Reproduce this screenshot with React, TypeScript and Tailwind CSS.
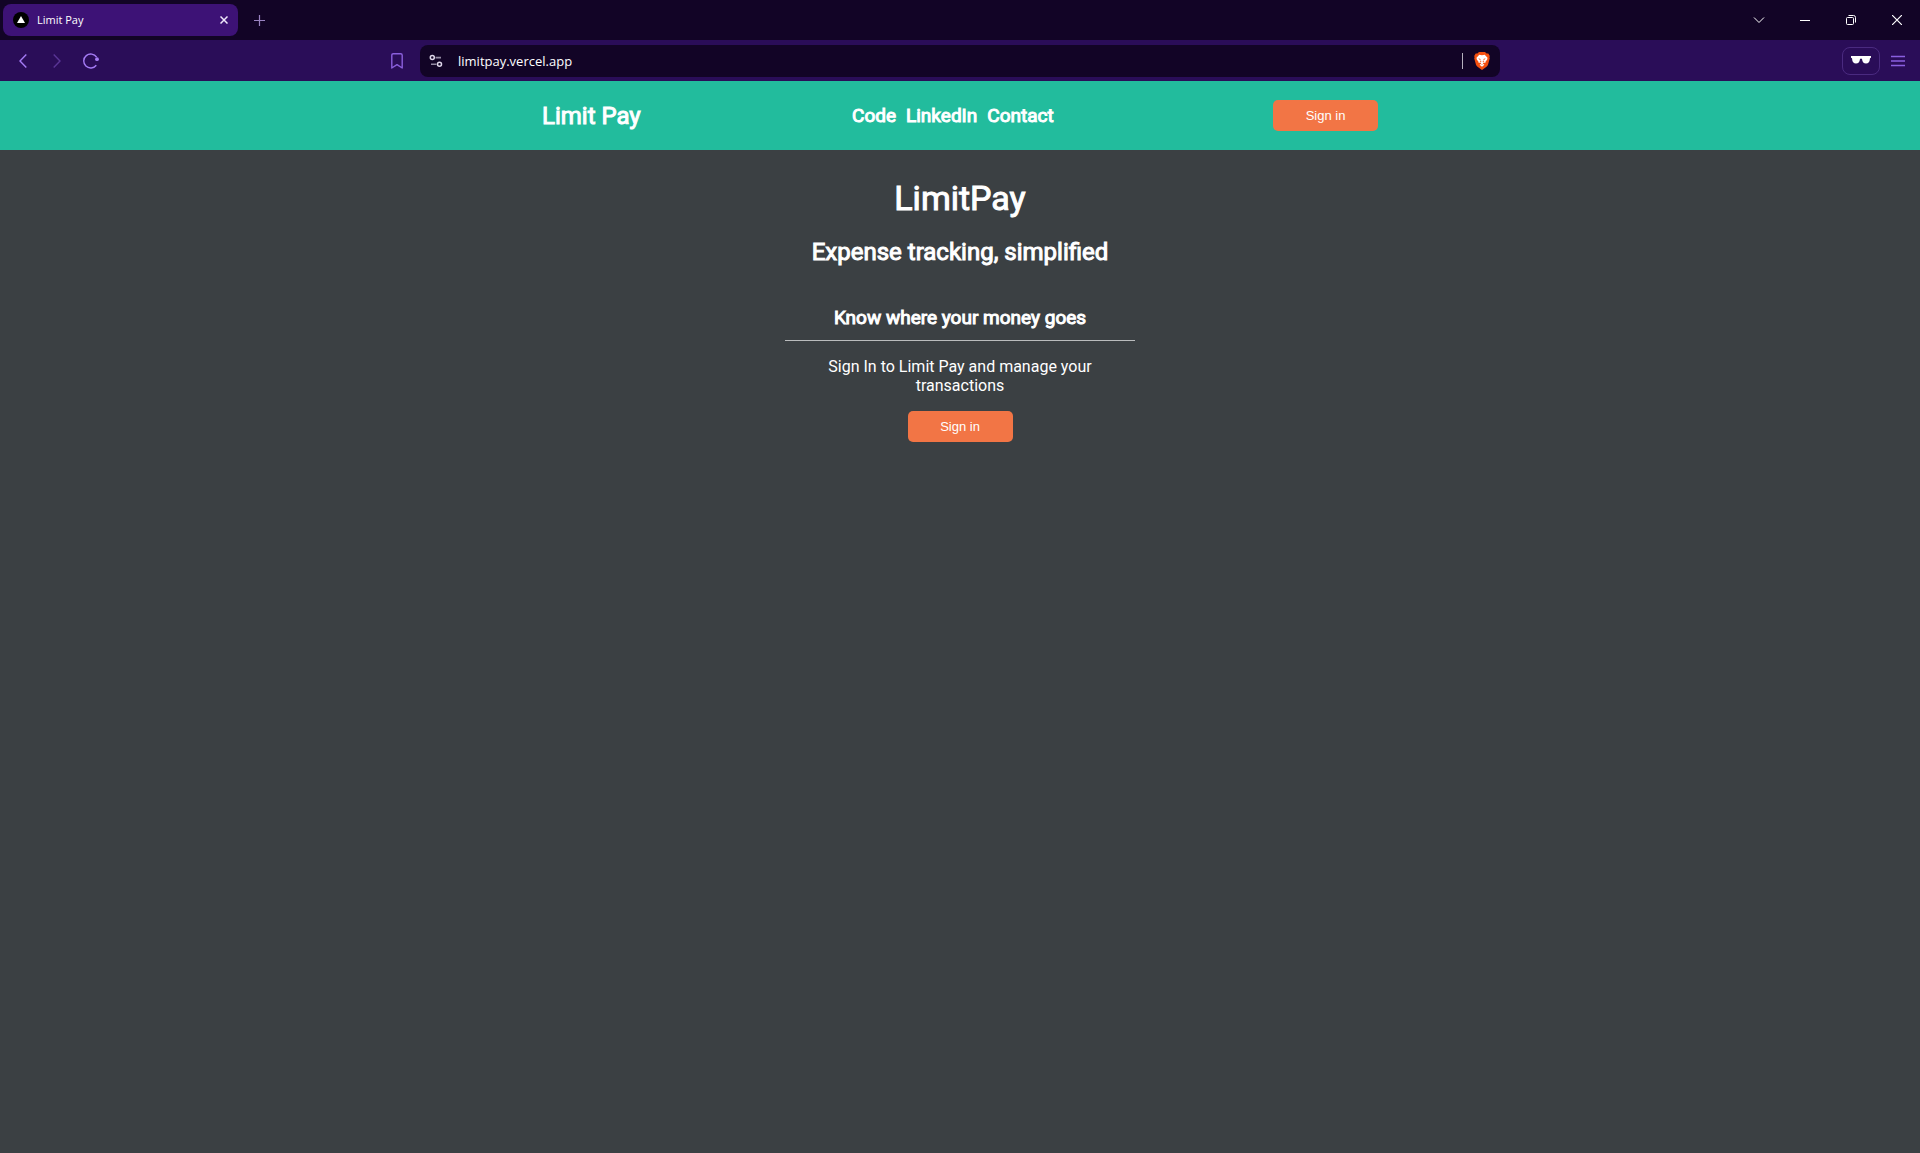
import React from "react";

const heavy = "font-normal [-webkit-text-stroke:1px_white]";

function SignIn() {
  return (
    <button
      type="button"
      className="h-[31px] w-[105px] rounded-[5px] bg-[#f27545] font-['Liberation_Sans',sans-serif] text-[13px] leading-4 text-white"
    >
      Sign in
    </button>
  );
}

function TabStrip() {
  return (
    <div className="flex h-10 items-center justify-between bg-[#120426]">
      <div className="flex items-center">
        <div className="ml-[3px] flex h-8 w-[235px] items-center rounded-lg bg-[#3d1276] pr-[6px] pl-[10px]">
          <svg viewBox="0 0 16 16" className="size-4" aria-hidden="true">
            <circle cx="8" cy="8" r="8" fill="#000" />
            <path d="M8 4L12 11H4Z" fill="#fff" />
          </svg>
          <span className="ml-2 flex-1 text-[11px] leading-4 text-white">Limit Pay</span>
          <button type="button" aria-label="Close tab" className="flex size-4 items-center justify-center">
            <svg viewBox="0 0 8 8" className="size-2" fill="none" stroke="#efe8fa" strokeWidth="1.5">
              <path d="M.5.5L7.5 7.5M7.500.5L.5 7.500" />
            </svg>
          </button>
        </div>
        <button type="button" aria-label="New tab" className="ml-[9px] flex size-6 items-center justify-center">
          <svg viewBox="0 0 11 11" className="size-[11px] shrink-0" stroke="#9a83c2" fill="none">
            <path d="M5.5 0V11M0 5.5H11" strokeWidth="1.2" />
          </svg>
        </button>
      </div>
      <div className="flex items-center text-white">
        <button type="button" aria-label="Search tabs" className="flex h-10 w-[46px] items-center justify-center">
          <svg viewBox="0 0 12 12" className="size-3" fill="none" stroke="currentColor">
            <path d="M1 3.5L6 8.5L11 3.5" />
          </svg>
        </button>
        <button type="button" aria-label="Minimize" className="flex h-10 w-[46px] items-center justify-center">
          <svg viewBox="0 0 10 10" className="size-[10px]" fill="none" stroke="currentColor">
            <path d="M0 5.5H10" />
          </svg>
        </button>
        <button type="button" aria-label="Restore" className="flex h-10 w-[46px] items-center justify-center">
          <svg viewBox="0 0 10 10" className="size-[10px]" fill="none" stroke="currentColor">
            <rect x=".5" y="2.5" width="7" height="7" rx="1" />
            <path d="M2.5.5H7.5A2 2 0 0 1 9.5 2.5V7.5" />
          </svg>
        </button>
        <button type="button" aria-label="Close" className="flex h-10 w-[46px] items-center justify-center">
          <svg viewBox="0 0 10 10" className="size-[10px]" fill="none" stroke="currentColor">
            <path d="M0 0L10 10M10 0L0 10" strokeWidth="1.2" />
          </svg>
        </button>
      </div>
    </div>
  );
}

function Toolbar() {
  return (
    <div className="grid h-[41px] grid-cols-[1fr_1080px_1fr] items-center bg-[#2a0d58]">
      <div className="flex items-center justify-between">
        <div className="flex items-center">
          <button type="button" aria-label="Back" className="ml-[17px] flex h-6 w-3 items-center justify-center">
            <svg viewBox="0 0 8 14" className="h-[14px] w-2" fill="none" stroke="#a57bf5" strokeWidth="1.4">
              <path d="M7.3.5L1 7L7.3 13.5" />
            </svg>
          </button>
          <button type="button" aria-label="Forward" className="ml-[22px] flex h-6 w-3 items-center justify-center">
            <svg viewBox="0 0 8 14" className="h-[14px] w-2" fill="none" stroke="#5a3596" strokeWidth="1.4">
              <path d="M.7.5L7 7L.7 13.5" />
            </svg>
          </button>
          <button type="button" aria-label="Reload" className="ml-5 flex size-4 items-center justify-center">
            <svg viewBox="0 0 16 16" className="size-4" fill="none" stroke="#a57bf5" strokeWidth="1.4">
              <path d="M13.6 4.2A7 7 0 1 0 13.3 12.3" />
              <circle cx="14" cy="6.200" r="1.9" fill="#a57bf5" stroke="none" />
            </svg>
          </button>
        </div>
        <button type="button" aria-label="Bookmark this page" className="mr-[17px] flex h-6 w-3 items-center justify-center">
          <svg viewBox="0 0 12 16" className="h-4 w-3" fill="none" stroke="#8a5fdc" strokeWidth="1.4">
            <path d="M.8 2.2Q.8.7 2.3.7H9.7Q11.2.7 11.2 2.2V15L6 11.6L.8 15Z" strokeLinejoin="round" />
          </svg>
        </button>
      </div>
      <div className="flex h-8 items-center rounded-lg bg-[#120426] pr-[10px] pl-[9px]">
        <svg viewBox="0 0 14 14" className="size-[14px]" fill="none" stroke="#ddd6e8" strokeWidth="1.5" aria-hidden="true">
          <circle cx="3.3" cy="3.6" r="2" />
          <circle cx="10.5" cy="10.2" r="2" />
          <path d="M6.5 3.6H12M2 10.2H7.5" stroke="#948ba3" strokeWidth="1.6" />
        </svg>
        <input
          type="text"
          aria-label="Address"
          defaultValue="limitpay.vercel.app"
          className="ml-[15px] h-6 min-w-0 flex-1 bg-transparent text-[13px] leading-4 text-white outline-none"
        />
        <span className="h-4 w-px bg-[#b5b0bd]" />
        <button type="button" aria-label="Shields" className="ml-[11px] h-[18px] w-4">
          <svg viewBox="0 0 16 18" className="h-[18px] w-4">
            <path d="M5 0H11L12.6 1.5L14.3 1.4L15.8 4L15.4 5.2L15.8 6.2L14 12.8Q13.6 14 12.5 14.8L8 18L3.5 14.8Q2.4 14 2 12.8L.2 6.2L.6 5.2L.2 4L1.7 1.4L3.4 1.5Z" fill="#f5500f" />
            <path d="M5.3 2.8L8 3.2L10.7 2.8L13.5 5.8L13.2 7.5L11.3 10L11.5 11L9.6 10.6L8.7 11.5L10.4 12.8L8 14.7L5.6 12.8L7.3 11.5L6.4 10.6L4.5 11L4.7 10L2.8 7.5L2.5 5.8Z" fill="#fff" />
            <path d="M4.2 6.3L6.6 6.9L6.2 8.2ZM11.8 6.3L9.4 6.9L9.8 8.2ZM5.6 9.3L7 8.6L7.4 10.2ZM10.4 9.300L9 8.600L8.600 10.200ZM6.500 12.200H9.500L8 12.800Z" fill="#f5500f" />
          </svg>
        </button>
      </div>
      <div className="flex items-center justify-end pr-[15px]">
        <button type="button" aria-label="Private window" className="flex h-7 w-[38px] items-center justify-center rounded-lg border border-[#4a2a80] pb-[2px]">
          <svg viewBox="0 0 20 8" className="h-2 w-5 shrink-0" fill="#fff">
            <path d="M0 0H20V1.7L19 2.3Q18.7 7.5 15 7.5Q11.5 7.5 11 3Q10 2 9 3Q8.5 7.5 5 7.5Q1.3 7.5 1 2.3L0 1.7Z" />
          </svg>
        </button>
        <button type="button" aria-label="Menu" className="ml-[11px] flex size-[14px] items-center">
          <svg viewBox="0 0 14 12" className="h-3 w-[14px]" fill="none" stroke="#8a5fe0" strokeWidth="1.4">
            <path d="M0 1.5H14M0 6H14M0 10.5H14" />
          </svg>
        </button>
      </div>
    </div>
  );
}

export default function App() {
  return (
    <div className="flex min-h-screen flex-col bg-[#3b4043] text-white font-['Roboto',sans-serif]">
      <div className="font-['Open_Sans',sans-serif]">
        <TabStrip />
        <Toolbar />
      </div>
      <header className="bg-[#22bc9d]">
        <div className="mx-auto flex h-[69px] w-full max-w-[836px] items-center justify-between">
          <a href="#home" className={`text-[24px] leading-7 ${heavy}`}>Limit Pay</a>
          <nav className={`mr-2 flex gap-[10px] text-[19px] leading-6 ${heavy}`}>
            <a href="#code">Code</a>
            <a href="#linkedin">LinkedIn</a>
            <a href="#contact">Contact</a>
          </nav>
          <SignIn />
        </div>
      </header>
      <main className="flex flex-col items-center pt-7 text-center">
        <h1 className={`text-[34px] leading-10 ${heavy}`}>LimitPay</h1>
        <h2 className={`mt-5 text-[24px] leading-7 ${heavy}`}>Expense tracking, simplified</h2>
        <section className="mt-10 flex w-full max-w-[350px] flex-col items-center">
          <h3 className={`w-full border-b border-[#babcbd] pb-[10px] text-[19px] leading-6 ${heavy}`}>
            Know where your money goes
          </h3>
          <p className="mt-4 mb-4 px-8 text-[16px] leading-[19px]">
            Sign In to Limit Pay and manage your transactions
          </p>
          <SignIn />
        </section>
      </main>
    </div>
  );
}
